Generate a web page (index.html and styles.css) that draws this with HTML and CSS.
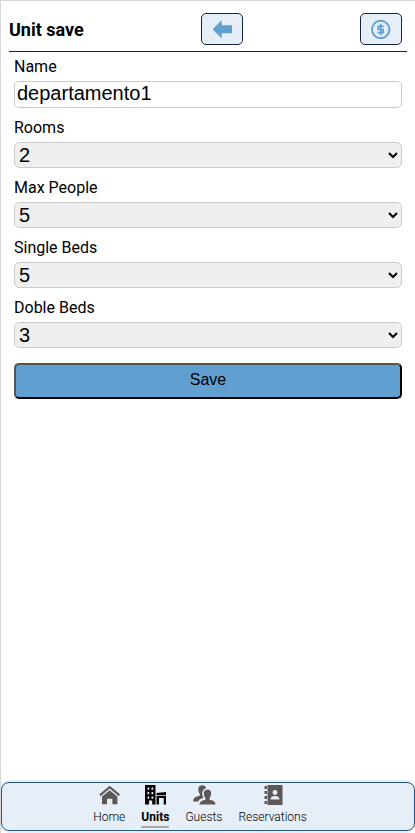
FILE: index.html
```html
<!DOCTYPE html>
<html lang="en">
<head>
<meta charset="utf-8">
<title>Unit save</title>
<link rel="stylesheet" href="styles.css">
</head>
<body>
<div class="app">
  <header class="header">
    <h1 class="title">Unit save</h1>
    <button class="icon-btn" aria-label="Back"><svg width="20" height="20" viewBox="0 0 20 20"><path fill="#609fd0" d="M.7 10.200 9.700 1v5.200H20.200v8H9.700v5.200z"/></svg></button>
    <button class="icon-btn" aria-label="Prices"><svg width="20" height="20" viewBox="0 0 20 20" fill="none" stroke="#609fd0" stroke-width="1.9"><circle cx="9.700" cy="10.500" r="8.700"/><path stroke-width="1.700" d="M12.800 7.300H7.200v3.200h5v3.200H6.500M9.700 4.800v11.400"/></svg></button>
  </header>
  <form class="form">
    <label class="label" for="name">Name</label>
    <input class="field input" id="name" value="departamento1">
    <label class="label" for="rooms">Rooms</label>
    <select class="field select" id="rooms"><option>2</option></select>
    <label class="label" for="people">Max People</label>
    <select class="field select" id="people"><option>5</option></select>
    <label class="label" for="single">Single Beds</label>
    <select class="field select" id="single"><option>5</option></select>
    <label class="label" for="double">Doble Beds</label>
    <select class="field select" id="double"><option>3</option></select>
    <button class="save" type="button">Save</button>
  </form>
  <nav class="nav">
    <a class="tab"><svg width="22" height="20" viewBox="-.7 0 22 20" fill="#5c5857"><path d="M11 .8 21.300 9.300l-1.100 1.900L11 3.600 1.800 11.200.7 9.300z"/><path d="M11 5.200 18.700 11.500v7.800h-5v-5.500H8.300v5.500h-5v-7.800z"/></svg><span>Home</span></a>
    <a class="tab active"><svg width="22" height="20" viewBox="-.5 0 22 20"><path fill-rule="evenodd" d="M.5 0h10.500v19.500H7.700v-4H4.500v4h-4zM3 2.500v2.300h1.700V2.500zM7 2.500v2.300h1.700V2.500zM3 7v2.300h1.700V7zM7 7v2.300h1.700V7zM3 11.500v2.300h1.700v-2.300zM7 11.500v2.300h1.700v-2.300z"/><path d="M12 8l9.500-1v3.200H12zM12 10.900h9.500v8.600h-2.300V13h-4.700v6.500H12z"/></svg><span>Units</span></a>
    <a class="tab"><svg width="24" height="20" viewBox="0 0 24 20" fill="#5c5857"><path d="M7.700 9C5 4 6.500.3 10.300.3c2.200 0 3.600 1.200 3.900 3-3.200.9-4.500 4-3.600 7.200.2.900.5 1.600.9 2.200-3 .8-4.700 1.800-5.300 3.800H1c0-3.200 2-4.700 6-5.500 1-.4 1.300-1.100.7-2z"/><path d="M13.500 13.300C10.300 8.500 12 4.500 15.500 4.500s5.200 4 2 8.800c-.3.800 0 1.300.8 1.600 3.300.7 5.200 1.800 5.200 4.600H7.500c0-2.800 1.900-3.900 5.200-4.600.8-.3 1.100-.8.8-1.600z"/><path fill="none" stroke="#e6eef7" stroke-width=".7" d="M14.300 3.500C11 4.500 10 8.500 12.500 12.800"/></svg><span>Guests</span></a>
    <a class="tab"><svg width="20" height="20" viewBox="0 0 20 20"><path fill="#5c5857" d="M4.500 0h15v20h-15zM1.500 1H4v3H1.500zM1.500 6H4v3H1.500zM1.500 11H4v3H1.500zM1.500 16H4v3H1.500z"/><circle cx="12" cy="7.500" r="2.400" fill="#e6eef7"/><path fill="#e6eef7" d="M7.500 14.500c0-2.500 1.500-3.500 4.500-3.500s4.500 1 4.500 3.500z"/></svg><span>Reservations</span></a>
  </nav>
</div>
</body>
</html>
```
FILE: styles.css
```css
* { box-sizing: border-box; }
body { margin: 0; background: #fff; color: #000; font-family: Roboto, sans-serif; }
.app {
  height: 833px;
  display: flex;
  flex-direction: column;
  overflow: hidden;
  border: solid #d8d8da;
  border-width: 1px 0 0 1px;
}
.header {
  height: 51px;
  margin: 0 8px;
  padding: 5px 5px 0 0;
  display: flex;
  align-items: center;
  justify-content: space-between;
  border-bottom: 1px solid #142440;
}
.title { margin: 2px 0 0; font-size: 18px; line-height: 22px; font-weight: 700; }
.icon-btn {
  width: 42px;
  height: 32px;
  padding: 0;
  display: flex;
  align-items: center;
  justify-content: center;
  background: #e6eef7;
  border: 1px solid #142440;
  border-radius: 5px;
}
.form { flex: 1; display: flex; flex-direction: column; padding: 5px 13px 0; }
.label { font-size: 16px; line-height: 19px; margin-bottom: 5px; }
.field {
  width: 100%;
  margin: 0 0 10px;
  font-family: "Liberation Sans", Arial, sans-serif;
  font-size: 20px;
  color: #000;
  border: 1px solid #ccc;
  border-radius: 5px;
}
.input { height: 27px; padding: 0 2px 2px; background: #fff; }
.select { height: 26px; padding: 0 0 4px; background-color: #efefef; }
.save {
  height: 36px;
  margin-top: 5px;
  padding: 0 6px 2px;
  font-family: "Liberation Sans", Arial, sans-serif;
  font-size: 16px;
  color: #000;
  background: #609fd0;
  border: 2px outset #000;
  border-radius: 5px;
}
.nav {
  height: 49px;
  margin-bottom: 2px;
  padding: 2px 16px 0 0;
  display: flex;
  justify-content: center;
  gap: 16px;
  background: #e6eef7;
  border: 1px solid #285781;
  border-radius: 8px;
  box-shadow: 0 0 0 2px #e6eef7;
}
.tab {
  height: 43px;
  display: flex;
  flex-direction: column;
  align-items: center;
  font-size: 12px;
  line-height: 14px;
  font-weight: 300;
  color: #000;
}
.tab svg { margin-bottom: 5px; }
.active { font-weight: 700; border-bottom: 2px solid #a9a9a9; }
```
